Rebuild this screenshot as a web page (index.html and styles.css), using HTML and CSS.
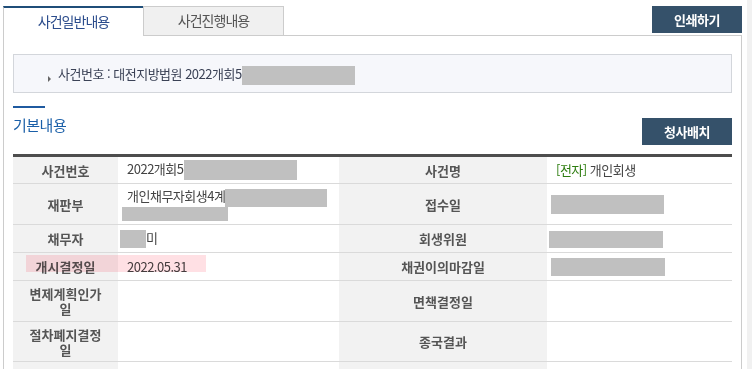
FILE: index.html
```html
<!DOCTYPE html>
<html lang="ko">
<head>
  <meta charset="UTF-8">
  <title>사건일반내용</title>
  <link rel="stylesheet" href="styles.css">
</head>
<body>
  <div class="wrap">
    <!-- Tabs -->
    <div class="top">
      <div class="tab on">사건일반내용</div>
      <div class="tab off">사건진행내용</div>
      <div class="fill">
        <button class="btn">인쇄하기</button>
      </div>
    </div>

    <div class="panel">
      <!-- Case number -->
      <div class="case">
        <span class="arrow"></span>사건번호 : 대전지방법원 2022개회5<span class="hide w113"></span>
      </div>

      <!-- Section header -->
      <div class="sec-head">
        <div class="sec-title">
          <span class="bar"></span>
          <span class="sec-text">기본내용</span>
        </div>
        <button class="btn btn-map">청사배치</button>
      </div>

      <table class="info">
        <colgroup>
          <col style="width:105px">
          <col style="width:221px">
          <col style="width:208px">
          <col style="width:185px">
        </colgroup>
        <tbody>
          <tr class="r1">
            <th>사건번호</th>
            <td>2022개회5<span class="hide w113 h20"></span></td>
            <th>사건명</th>
            <td><span class="green">[전자]</span> 개인회생</td>
          </tr>
          <tr class="r2">
            <th>재판부</th>
            <td>
              <div class="line">개인채무자회생4계<span class="hide w102 h18"></span></div>
              <div class="line2"><span class="hide w106 h14"></span></div>
            </td>
            <th>접수일</th>
            <td class="pad4"><span class="hide w113 h19"></span></td>
          </tr>
          <tr class="r3">
            <th>채무자</th>
            <td class="pad2"><span class="hide w26 h18"></span>미</td>
            <th>회생위원</th>
            <td class="pad2"><span class="hide w114 h17"></span></td>
          </tr>
          <tr class="r3">
            <th class="marked"><span class="mark"></span>개시결정일</th>
            <td>2022.05.31</td>
            <th>채권이의마감일</th>
            <td class="pad4"><span class="hide w114 h18"></span></td>
          </tr>
          <tr class="r2">
            <th>변제계획인가일</th>
            <td></td>
            <th>면책결정일</th>
            <td></td>
          </tr>
          <tr class="r6">
            <th>절차폐지결정일</th>
            <td></td>
            <th>종국결과</th>
            <td></td>
          </tr>
          <tr class="r2">
            <th>&nbsp;</th>
            <td></td>
            <th>&nbsp;</th>
            <td></td>
          </tr>
        </tbody>
      </table>
    </div>
  </div>

  <div class="scroll"></div>
</body>
</html>
```

FILE: styles.css
```css
html, body {
  height: 100%;
  overflow: hidden;
}

body {
  margin: 0;
  display: flex;
  font-family: "Noto Sans CJK KR", "Noto Sans", sans-serif;
  font-size: 13px;
  color: #444;
  background: #fff;
}

.wrap {
  width: 739px;
  margin-left: 3px;
}

.scroll {
  width: 5px;
  margin-left: auto;
  background: #f1f1f1;
}

/* Tabs */
.top {
  display: flex;
  margin-top: 6px;
  height: 30px;
}

.tab {
  box-sizing: border-box;
  text-align: center;
  line-height: 26px;
  font-size: 14px;
  letter-spacing: -1px;
}

.tab.on {
  width: 140px;
  border-left: 1px solid #ccc;
  border-top: 2px solid #1f4e79;
  color: #2b4c8c;
}

.tab.off {
  width: 141px;
  border: 1px solid #ccc;
  background: #f0f0f0;
  color: #555;
}

.fill {
  flex: 1;
  display: flex;
  justify-content: flex-end;
  align-items: flex-start;
  border-bottom: 1px solid #ccc;
}

.btn {
  width: 90px;
  height: 27px;
  border: 0;
  padding: 0;
  background: #35516a;
  color: #fff;
  font-family: inherit;
  font-size: 13px;
  font-weight: 700;
  letter-spacing: -0.5px;
}

/* Panel */
.panel {
  border: 1px solid #ccc;
  border-top: 0;
  padding: 18px 9px 0 9px;
  height: 400px;
}

.case {
  height: 37px;
  line-height: 37px;
  border: 1px solid #d3d6db;
  background: #f6f7fb;
  padding-left: 34px;
  color: #3b4256;
  letter-spacing: -0.5px;
}

.arrow {
  display: inline-block;
  width: 0;
  height: 0;
  border-left: 3px solid #666;
  border-top: 3px solid transparent;
  border-bottom: 3px solid transparent;
  margin-right: 7px;
  vertical-align: -3px;
}

.hide {
  display: inline-block;
  background: #c0c0c0;
  vertical-align: middle;
  height: 19px;
}

.w26 { width: 26px; }
.w102 { width: 102px; }
.w106 { width: 106px; }
.w113 { width: 113px; }
.w114 { width: 114px; }
.h14 { height: 14px; }
.h17 { height: 17px; }
.h18 { height: 18px; }
.h19 { height: 19px; }
.h20 { height: 20px; }

.sec-head {
  display: flex;
  justify-content: space-between;
  align-items: flex-start;
  margin-top: 13px;
}

.bar {
  display: block;
  width: 32px;
  height: 2px;
  background: #1f5aa0;
}

.sec-text {
  display: block;
  margin-top: 7px;
  line-height: 20px;
  font-size: 15px;
  color: #1a5fa8;
  letter-spacing: -0.5px;
}

.btn-map {
  margin-top: 12px;
}

/* Info table */
.info {
  width: 719px;
  margin-top: 9px;
  table-layout: fixed;
  border-collapse: separate;
  border-spacing: 0;
  border-top: 3px solid #4d4d4d;
}

.info th,
.info td {
  padding: 0 9px;
  border-bottom: 1px solid #dadada;
  vertical-align: middle;
  height: 26px;
}

.info th {
  padding: 0 12px;
  background: #f2f2f2;
  color: #555;
  font-weight: 700;
  text-align: center;
  line-height: 15px;
}

.info td {
  background: #fff;
  text-align: left;
  line-height: 18px;
  letter-spacing: -0.5px;
}

.info .r2 th, .info .r2 td { height: 40px; }
.info .r3 th, .info .r3 td { height: 27px; }
.info .r6 th, .info .r6 td { height: 39px; }

.info td.pad4 { padding-left: 4px; }
.info td.pad2 { padding-left: 2px; }

.line2 {
  margin-left: -5px;
  height: 14px;
}

.line2 .hide {
  vertical-align: top;
}

.green {
  color: #2e7d10;
}

.marked {
  position: relative;
}

.mark {
  position: absolute;
  left: 13px;
  top: 2px;
  width: 180px;
  height: 17px;
  background: #ffe0e4;
  mix-blend-mode: multiply;
}
```
